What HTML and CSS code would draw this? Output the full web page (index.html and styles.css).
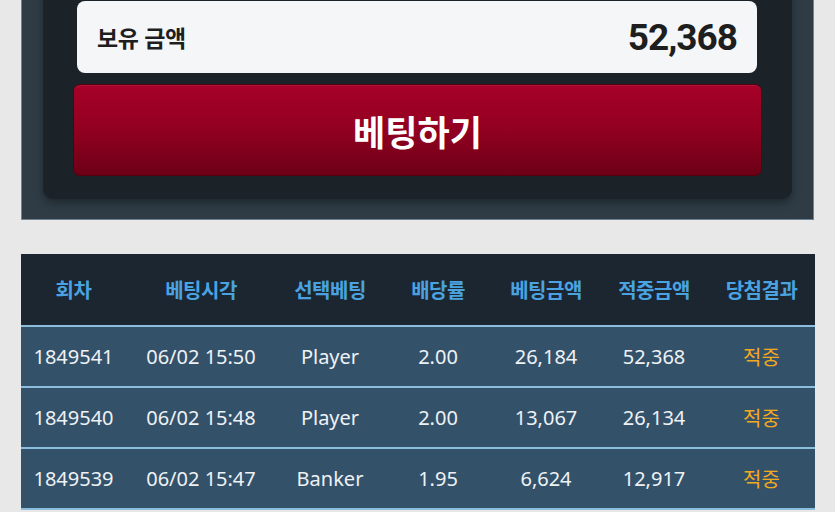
FILE: index.html
```html
<!DOCTYPE html>
<html lang="ko">
<head>
  <meta charset="UTF-8">
  <meta name="viewport" content="width=device-width, initial-scale=1.0">
  <title>베팅</title>
  <link rel="stylesheet" href="styles.css">
</head>
<body>
  <section class="wallet">
    <div class="bet-panel">
      <div class="balance">
        <span class="balance-label">보유 금액</span>
        <span class="balance-value">52,368</span>
      </div>
      <button class="bet-btn" type="button">베팅하기</button>
    </div>
  </section>

  <!-- 베팅 내역 -->
  <table class="history">
    <colgroup>
      <col style="width: 105px">
      <col style="width: 150px">
      <col style="width: 108px">
      <col style="width: 108px">
      <col style="width: 108px">
      <col style="width: 108px">
      <col style="width: 107px">
    </colgroup>
    <thead>
      <tr>
        <th>회차</th>
        <th>베팅시각</th>
        <th>선택베팅</th>
        <th>배당률</th>
        <th>베팅금액</th>
        <th>적중금액</th>
        <th>당첨결과</th>
      </tr>
    </thead>
    <tbody>
      <tr>
        <td>1849541</td>
        <td>06/02 15:50</td>
        <td>Player</td>
        <td>2.00</td>
        <td>26,184</td>
        <td>52,368</td>
        <td class="win">적중</td>
      </tr>
      <tr>
        <td>1849540</td>
        <td>06/02 15:48</td>
        <td>Player</td>
        <td>2.00</td>
        <td>13,067</td>
        <td>26,134</td>
        <td class="win">적중</td>
      </tr>
      <tr>
        <td>1849539</td>
        <td>06/02 15:47</td>
        <td>Banker</td>
        <td>1.95</td>
        <td>6,624</td>
        <td>12,917</td>
        <td class="win">적중</td>
      </tr>
    </tbody>
  </table>
</body>
</html>
```

FILE: styles.css
```css
* {
  margin: 0;
  padding: 0;
  box-sizing: border-box;
}

body {
  font-family: "Noto Sans", "Noto Sans CJK KR", sans-serif;
  background-color: #e8e8e8;
  color: #eef2f5;
  overflow: hidden;
}

/* 상단 베팅 패널 */
.wallet {
  margin: -40px 21px 0;
  padding: 18px 21px 20px;
  background-color: #2f3c46;
  border: 1px solid #6f8291;
}

.bet-panel {
  padding: 22px 30px 23px;
  background-color: #1c2328;
  border-radius: 10px;
  box-shadow: 0 4px 8px rgba(0, 0, 0, 0.35);
}

.balance {
  display: flex;
  justify-content: space-between;
  align-items: center;
  height: 72px;
  margin: 0 5px 0 4px;
  padding: 0 20px;
  background-color: #f5f6f8;
  border-radius: 8px;
  color: #1e1e1e;
}

.balance-label {
  font-family: "Noto Sans CJK KR", sans-serif;
  font-size: 23px;
  font-weight: 700;
  letter-spacing: -0.5px;
}

.balance-value {
  font-family: Roboto, "Liberation Sans", sans-serif;
  font-size: 37px;
  font-weight: 700;
  letter-spacing: -1px;
}

.bet-btn {
  display: block;
  width: 100%;
  height: 92px;
  margin-top: 11px;
  background: linear-gradient(to bottom, #a70129, #920021 50%, #6c0016);
  border: 1px solid #55000f;
  border-radius: 7px;
  color: #fff;
  font-family: "Noto Sans CJK KR", sans-serif;
  font-size: 35px;
  font-weight: 700;
  cursor: pointer;
  box-shadow: inset 0 1px 0 rgba(255, 255, 255, 0.08);
}

/* 베팅 내역 테이블 */
.history {
  width: 794px;
  margin: 34px 0 0 21px;
  border-collapse: collapse;
  table-layout: fixed;
}

.history th {
  height: 72px;
  background-color: #1b2631;
  color: #4aa3e0;
  font-family: "Noto Sans CJK KR", sans-serif;
  font-size: 20px;
  font-weight: 700;
  letter-spacing: -0.5px;
}

.history td {
  height: 61px;
  background-color: #34516a;
  border-top: 2px solid #8bbddd;
  text-align: center;
  font-size: 20px;
}

.history tbody tr:last-child td {
  border-bottom: 2px solid #8bbddd;
}

.history td.win {
  color: #f3aa1d;
  font-family: "Noto Sans CJK KR", sans-serif;
}
```
